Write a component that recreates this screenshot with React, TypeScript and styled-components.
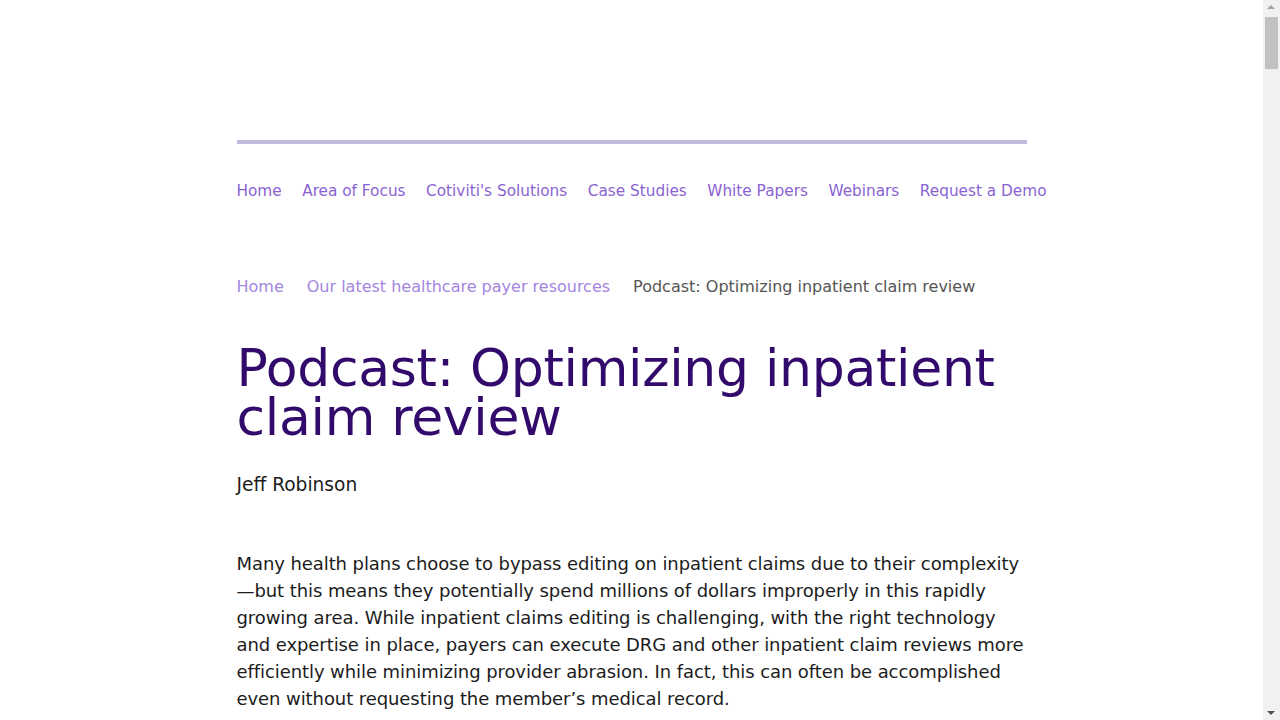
import React from 'react'
import styled, { createGlobalStyle } from 'styled-components'

const colors = {
    nav: '#8a63d2',
    crumb: '#a386e0',
    current: '#555555',
    title: '#320a6c',
    text: '#1c1c1c',
    bar: '#c2b9df',
}

const GlobalStyle = createGlobalStyle`
    html { scrollbar-width: none; }
    html::-webkit-scrollbar { display: none; }
    body {
        margin: 0;
        background: #ffffff;
        font-family: "DejaVu Sans", "Noto Sans", sans-serif;
        color: ${ colors.text };
    }
`

// centred in the viewport minus the 17px scrollbar
const Page = styled.div`
    width: 790px;
    margin-left: calc((100vw - 807px) / 2);
    padding-top: 140px;
    min-height: 12800px;
`

// drawn scrollbar, sits over the right edge of the page
const ScrollTrack = styled.div`
    position: fixed;
    top: 0;
    right: 0;
    width: 17px;
    height: 100vh;
    background: #f1f1f1;
`

const ScrollThumb = styled.div`
    position: absolute;
    top: 17px;
    left: 2px;
    width: 13px;
    height: 52px;
    background: #c1c1c1;
`

const Arrow = styled.div<{ $down?: boolean }>`
    position: absolute;
    left: 4px;
    ${ p => p.$down ? 'bottom: 5px;' : 'top: 5px;' }
    width: 0;
    height: 0;
    border-left: 4.5px solid transparent;
    border-right: 4.5px solid transparent;
    ${ p => p.$down ? 'border-top: 4px solid #505050;' : 'border-bottom: 4px solid #a3a3a3;' }
`

const TopBar = styled.div`
    height: 4px;
    background-color: ${ colors.bar };
`

const NavList = styled.nav`
    display: flex;
    gap: 20.5px;
    margin-top: 37px;
    white-space: nowrap;
`

const NavLink = styled.a`
    font-size: 15.3px;
    line-height: 20px;
    color: ${ colors.nav };
    text-decoration: none;
    cursor: pointer;
`

const Breadcrumbs = styled.div`
    display: flex;
    gap: 23px;
    margin-top: 76px;
    font-size: 16px;
    line-height: 20px;
    white-space: nowrap;
`

const Crumb = styled.a<{ $current?: boolean }>`
    color: ${ p => p.$current ? colors.current : colors.crumb };
    text-decoration: none;
`

const Title = styled.h1`
    margin: 47px 0 0;
    font-size: 52px;
    font-weight: 500;
    line-height: 49px;
    color: ${ colors.title };
    letter-spacing: -0.3px;
`

const Author = styled.div`
    margin-top: 29px;
    font-size: 18.6px;
    line-height: 27px;
`

const Body = styled.div`
    margin-top: 52px;
    p {
        margin: 0 0 27px;
        font-size: 18px;
        line-height: 27px;
        letter-spacing: -0.08px;
    }
`

const navItems = [
    'Home',
    'Area of Focus',
    "Cotiviti's Solutions",
    'Case Studies',
    'White Papers',
    'Webinars',
    'Request a Demo',
]

const paragraphs = [
    'Many health plans choose to bypass editing on inpatient claims due to their complexity —but this means they potentially spend millions of dollars improperly in this rapidly growing area. While inpatient claims editing is challenging, with the right technology and expertise in place, payers can execute DRG and other inpatient claim reviews more efficiently while minimizing provider abrasion. In fact, this can often be accomplished even without requesting the member’s medical record.',
    'In this podcast, we discuss how health plans can build a more effective inpatient claim review program, and the role that prepay and postpay editing play in controlling costs.',
]

export default function App() {
    return (
        <>
            <GlobalStyle />
            <Page>
                <TopBar />
                <NavList>
                    { navItems.map(label => <NavLink key={label}>{label}</NavLink>) }
                </NavList>
                <Breadcrumbs>
                    <Crumb>Home</Crumb>
                    <Crumb>Our latest healthcare payer resources</Crumb>
                    <Crumb $current>Podcast: Optimizing inpatient claim review</Crumb>
                </Breadcrumbs>
                <Title>Podcast: Optimizing inpatient claim review</Title>
                <Author>Jeff Robinson</Author>
                <Body>
                    { paragraphs.map((text, i) => <p key={i}>{text}</p>) }
                </Body>
            </Page>
            <ScrollTrack>
                <Arrow />
                <ScrollThumb />
                <Arrow $down />
            </ScrollTrack>
        </>
    )
}
